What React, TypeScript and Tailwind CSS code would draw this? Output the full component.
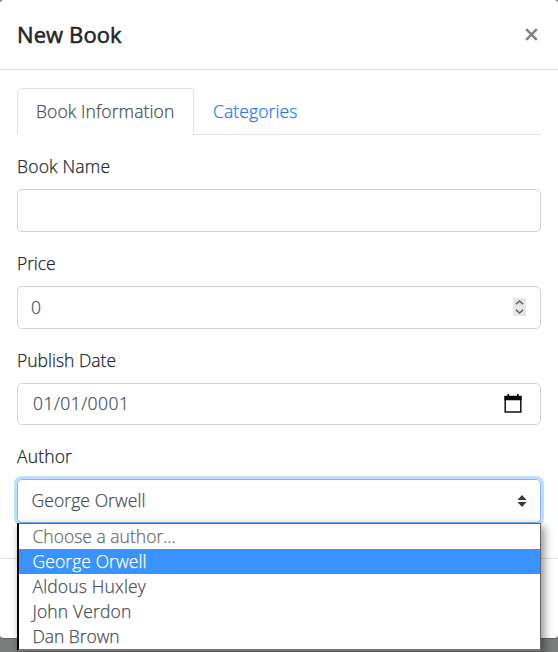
import type { ReactNode } from "react";

const authors = [
  { name: "Aldous Huxley", tracking: "tracking-[0.16px]" },
  { name: "John Verdon", tracking: "tracking-[0.14px]" },
  { name: "Dan Brown", tracking: "tracking-[-0.05px]" },
];

function Field({ label, className, children }: { label: ReactNode; className: string; children: ReactNode }) {
  return (
    <div className={`flex flex-col ${className}`}>
      <label className="h-9 leading-[27px] text-[#212529]">{label}</label>
      {children}
    </div>
  );
}

export default function App() {
  return (
    <div className="h-[652px] w-[558px] overflow-hidden bg-[#7b7d7c] font-['Open_Sans','Noto_Sans',sans-serif] text-[17.5px] font-light text-[#495057] [-webkit-text-stroke:0.25px]">
      <div className="flex h-[639px] flex-col rounded-[4px] border-b border-[#616161] bg-white">
        <header className="flex h-[70px] shrink-0 items-center justify-between border-b border-[#dee2e6] pl-[17px] pr-5">
          <h5 className="pb-[2px] text-[22px] font-normal leading-[34px] text-[#212529] [-webkit-text-stroke:0.55px]">
            <span className="tracking-[0.1px]">New Book</span>
          </h5>
          <button aria-label="Close" className="flex">
            <svg width="13" height="13" viewBox="0 0 13 13" fill="none" stroke="#7f7f7f" strokeWidth="2.4">
              <path d="M1.2 1.2 11.8 11.8M11.8 1.2 1.2 11.8" />
            </svg>
          </button>
        </header>

        <main className="flex h-[488px] shrink-0 flex-col px-[17px] pt-[18px]">
          <nav className="flex h-[47px] shrink-0 border-b border-[#dee2e6]">
            <div className="h-[47px] w-[177px] rounded-t-[5px] border border-b-0 border-[#dee2e6] bg-white pl-[18px] leading-[45px]">
              <span className="whitespace-nowrap tracking-[0.1px]">Book Information</span>
            </div>
            <div className="pl-[19px] leading-[47px] text-[#2478fb]">
              <span className="tracking-[0.1px]">Categories</span>
            </div>
          </nav>

          <Field className="mt-[18px]" label={<span className="tracking-[0.2px]">Book Name</span>}>
            <div className="h-[43px] rounded-[5px] border border-[#ced4da]" />
          </Field>

          <Field className="mt-[18px]" label={<span className="tracking-[-0.1px]">Price</span>}>
            <div className="flex h-[43px] items-center justify-between rounded-[5px] border border-[#ced4da] px-[14px]">
              <span className="-ml-px">0</span>
              <svg className="-mt-px" width="13" height="18" viewBox="0 0 13 18" fill="none">
                <path d="M0 0h13v18H0z" fill="#e6e6e6" />
                <path d="M3 6.2 6.5 3 10 6.2M3 11.8 6.5 15 10 11.8" stroke="#666" strokeWidth="1.6" />
              </svg>
            </div>
          </Field>

          <Field className="mt-[18px]" label={<span>Publish Date</span>}>
            <div className="flex h-[42px] items-center justify-between rounded-[5px] border border-[#ced4da] pl-[15px] pr-[18px]">
              <span className="pb-px tracking-[0.45px]">01/01/0001</span>
              <svg width="18" height="20" viewBox="0 0 18 20" fill="none">
                <path d="M1.2 2.5h15.6v15.5H1.2z" stroke="#111" strokeWidth="1.5" />
                <path d="M.5 2h17v4.3H.5zM3.5 0h1.6v3H3.5zM13 0h1.6v3H13z" fill="#000" />
              </svg>
            </div>
          </Field>

          <Field className="mt-[18px]" label={<span className="tracking-[0.15px]">Author</span>}>
            <div className="relative flex h-[44px] items-center justify-between rounded-[5px] border border-[#80bdff] pl-[13.5px] pr-[13px] shadow-[0_0_0_3px_#bfdeff]">
              <span className="pb-px tracking-[0.08px]">George Orwell</span>
              <svg className="-mt-px" width="10" height="12" viewBox="0 0 10 12" fill="#343a40">
                <path d="M5 0 9.6 4.9H.4zM5 12 .4 6.9h9.2z" />
              </svg>
              <ul className="absolute -left-px top-[43px] z-10 h-[128px] w-[524px] border border-l-2 border-b-2 border-[#666] border-l-black border-b-[#777] bg-white leading-[25px] shadow-[4px_4px_8px_rgba(0,0,0,0.35),0_0_8px_rgba(0,0,0,0.12)]">
                <li className="h-[25px] pl-[13.5px] text-[#6d6d6d]"><span>Choose a author...</span></li>
                <li className="h-[25px] bg-[#3a92ff] pl-[13.5px] text-white"><span className="tracking-[0.08px]">George Orwell</span></li>
                {authors.map((a) => (
                  <li key={a.name} className="h-[25px] pl-[13.5px]">
                    <span className={a.tracking}>{a.name}</span>
                  </li>
                ))}
              </ul>
            </div>
          </Field>
        </main>
        <footer className="grow border-t border-[#dee2e6]" />
      </div>
    </div>
  );
}
